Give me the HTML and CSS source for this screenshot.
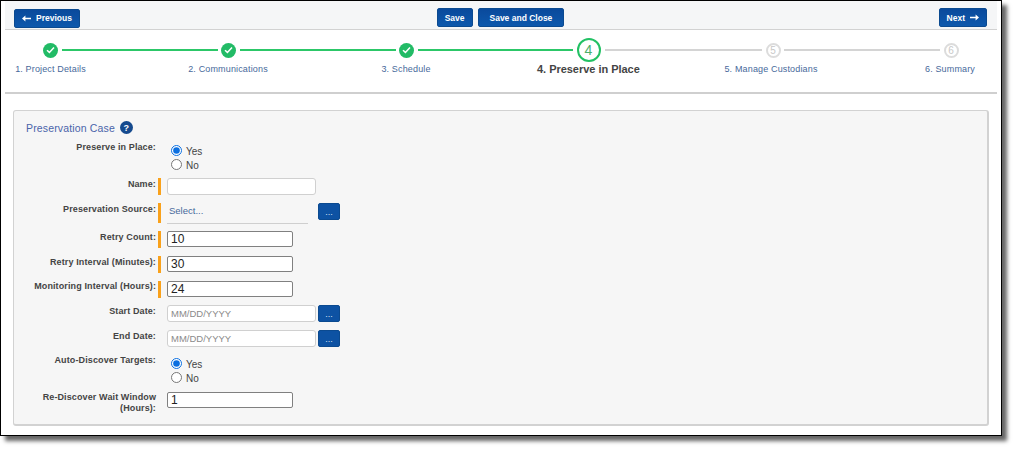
FILE: index.html
```html
<!DOCTYPE html>
<html lang="en">
<head>
<meta charset="utf-8">
<title>Preserve in Place</title>
<link rel="stylesheet" href="styles.css">
</head>
<body>
<div class="frame">
  <div class="toolbar">
    <div class="tb-left">
      <button class="btn" type="button">
        <svg class="arrow" width="9" height="7" viewBox="0 0 9 7"><path d="M0 3.5 3.4 .6V2.7H9V4.3H3.4V6.4Z" fill="#fff"/></svg>
        Previous
      </button>
    </div>
    <div class="tb-center">
      <button class="btn" type="button">Save</button>
      <button class="btn wide" type="button">Save and Close</button>
    </div>
    <div class="tb-right">
      <button class="btn" type="button">
        Next
        <svg class="arrow" width="9" height="7" viewBox="0 0 9 7"><path d="M9 3.5 5.6 .6V2.7H0V4.3H5.6V6.4Z" fill="#fff"/></svg>
      </button>
    </div>
  </div>

  <div class="stepper">
    <div class="track">
      <span class="dot done"><svg width="9" height="8" viewBox="0 0 9 8"><path d="M1 4.2 3.4 6.4 8 1.4" fill="none" stroke="#fff" stroke-width="1.5"/></svg></span>
      <span class="line on l1"></span>
      <span class="dot done"><svg width="9" height="8" viewBox="0 0 9 8"><path d="M1 4.2 3.4 6.4 8 1.4" fill="none" stroke="#fff" stroke-width="1.5"/></svg></span>
      <span class="line on l2"></span>
      <span class="dot done"><svg width="9" height="8" viewBox="0 0 9 8"><path d="M1 4.2 3.4 6.4 8 1.4" fill="none" stroke="#fff" stroke-width="1.5"/></svg></span>
      <span class="line on l3"></span>
      <span class="dot current">4</span>
      <span class="line l4"></span>
      <span class="dot todo">5</span>
      <span class="line l5"></span>
      <span class="dot todo">6</span>
    </div>
    <div class="labels">
      <span class="label">1. Project Details</span>
      <span class="label s2">2. Communications</span>
      <span class="label">3. Schedule</span>
      <span class="label active s4">4. Preserve in Place</span>
      <span class="label s5">5. Manage Custodians</span>
      <span class="label s6">6. Summary</span>
    </div>
  </div>

  <div class="content">
    <section class="panel">
      <h2 class="title">Preservation Case <span class="help">?</span></h2>

      <div class="row r-first">
        <span class="lbl">Preserve in Place:</span>
        <span class="mark none"></span>
        <div class="radios">
          <label class="radio"><input type="radio" name="pip" checked><span class="rtext">Yes</span></label>
          <label class="radio"><input type="radio" name="pip"><span class="rtext">No</span></label>
        </div>
      </div>

      <div class="row r-name">
        <span class="lbl">Name:</span>
        <span class="mark"></span>
        <input class="soft" type="text">
      </div>

      <div class="row r-source">
        <span class="lbl">Preservation Source:</span>
        <span class="mark tall"></span>
        <div class="select">Select...</div>
        <button class="dots" type="button">...</button>
      </div>

      <div class="row r-num tight">
        <span class="lbl">Retry Count:</span>
        <span class="mark"></span>
        <input class="hard" type="text" value="10">
      </div>

      <div class="row r-num">
        <span class="lbl">Retry Interval (Minutes):</span>
        <span class="mark"></span>
        <input class="hard" type="text" value="30">
      </div>

      <div class="row r-num">
        <span class="lbl up">Monitoring Interval (Hours):</span>
        <span class="mark"></span>
        <input class="hard" type="text" value="24">
      </div>

      <div class="row r-num tight">
        <span class="lbl">Start Date:</span>
        <span class="mark none"></span>
        <input class="soft" type="text" placeholder="MM/DD/YYYY">
        <button class="dots" type="button">...</button>
      </div>

      <div class="row r-num">
        <span class="lbl">End Date:</span>
        <span class="mark none"></span>
        <input class="soft" type="text" placeholder="MM/DD/YYYY">
        <button class="dots" type="button">...</button>
      </div>

      <div class="row r-auto">
        <span class="lbl">Auto-Discover Targets:</span>
        <span class="mark none"></span>
        <div class="radios">
          <label class="radio"><input type="radio" name="adt" checked><span class="rtext">Yes</span></label>
          <label class="radio"><input type="radio" name="adt"><span class="rtext">No</span></label>
        </div>
      </div>

      <div class="row r-last">
        <span class="lbl up">Re-Discover Wait Window (Hours):</span>
        <span class="mark none"></span>
        <input class="hard" type="text" value="1">
      </div>
    </section>
  </div>
</div>
</body>
</html>
```

FILE: styles.css
```css
* { box-sizing: border-box; }
html, body { margin: 0; padding: 0; background: #fff; }
body { font-family: "Liberation Sans", Arial, sans-serif; width: 1017px; height: 451px; overflow: hidden; }

.frame {
  width: 1002px;
  height: 436px;
  background: #fff;
  border: 1px solid #000;
  box-shadow: 5px 5px 4px #666;
  padding: 0 4px;
}

.toolbar {
  display: grid;
  grid-template-columns: 1fr auto 1fr;
  align-items: center;
  height: 29px;
  padding: 5px 10px 0 9px;
  background: #f5f6f7;
  border-bottom: 1px solid #d2d2d2;
}
.tb-center { display: flex; gap: 5px; }
.tb-right { display: flex; justify-content: flex-end; }

.btn {
  display: inline-flex;
  align-items: center;
  gap: 5px;
  height: 19px;
  padding: 0 7px;
  border: 1px solid #0b4a90;
  border-radius: 2px;
  background: linear-gradient(#0a4a9c, #0d58ac);
  color: #fff;
  font: bold 8.5px "Liberation Sans", Arial, sans-serif;
}
.btn.wide { padding: 0 11px; }

.stepper {
  height: 64px;
  border-bottom: 2px solid #cfcfcf;
  padding-top: 8px;
}
.track {
  display: flex;
  align-items: center;
  height: 24px;
  padding-left: 38px;
}
.dot {
  display: flex;
  align-items: center;
  justify-content: center;
  flex: none;
  width: 15px;
  height: 15px;
  border-radius: 50%;
}
.done { background: #22bb66; }
.current {
  width: 24px;
  height: 24px;
  border: 2px solid #22c164;
  color: #4caf6a;
  font-size: 14px;
}
.todo {
  border: 2px solid #dcdcdc;
  color: #c8c8c8;
  font-size: 10px;
}
.line { flex: none; height: 2px; margin: 0 3.5px; background: #d4d4d4; }
.line.on { background: #2cc768; }
.l1, .l2 { width: 156px; }
.l3 { width: 155px; margin-right: 4px; }
.l4 { width: 157px; margin: 0 4px; }
.l5 { width: 156px; }

.labels {
  display: flex;
  gap: 78px;
  align-items: center;
  height: 12px;
  margin: 1px 0 0 -4.5px;
}
.label {
  flex: none;
  width: 100px;
  text-align: center;
  white-space: nowrap;
  font-size: 9px;
  letter-spacing: .15px;
  color: #47699b;
}
.label.active { font-size: 11px; font-weight: bold; color: #444; letter-spacing: -.03px; }
.s2 { margin-left: -.5px; }
.s4 { margin-left: 3px; }
.s5 { margin-left: 6px; }
.s6 { margin-left: 1px; }

.content { padding: 16px 8px 0; }

.panel {
  height: 316px;
  background: #f6f6f6;
  border: 1px solid #d2d2d2;
  border-right-width: 2px;
  border-bottom-width: 2px;
  border-radius: 3px;
  padding: 10px 0 0 12px;
}
.title {
  display: flex;
  align-items: center;
  gap: 5px;
  margin: 0;
  height: 13px;
  font-size: 10.5px;
  font-weight: normal;
  color: #4a64aa;
  letter-spacing: .15px;
}
.help {
  display: flex;
  align-items: center;
  justify-content: center;
  width: 13px;
  height: 13px;
  border-radius: 50%;
  background: #154a8e;
  color: #fff;
  font-size: 9px;
  font-weight: bold;
}

.row {
  display: flex;
  align-items: flex-start;
}
.lbl {
  flex: none;
  width: 131px;
  margin-top: 1px;
  padding-right: 1px;
  text-align: right;
  font-size: 9px;
  font-weight: bold;
  line-height: 11px;
  letter-spacing: .12px;
  color: #444;
}
.lbl.up { margin-top: 0; }
.mark {
  flex: none;
  width: 3px;
  height: 17px;
  margin: 0 6px 0 1px;
  background: #f9a11b;
}
.mark.none { background: transparent; }
.mark.tall { height: 20px; }

.r-first { height: 31px; margin-top: 7px; }
.r-name { height: 17px; margin-top: 6px; }
.r-source { height: 21px; margin-top: 8px; }
.r-num { height: 17px; margin-top: 8px; }
.r-num.tight { margin-top: 7px; }
.r-auto { height: 31px; margin-top: 7px; }
.r-last { height: 24px; margin-top: 7px; }

.radios { display: flex; flex-direction: column; gap: 2px; padding: 3px 0 0 4px; }
.radio {
  display: flex;
  align-items: center;
  gap: 4px;
  height: 12px;
  font-size: 10px;
  color: #444;
}
.rtext { margin-top: 2px; }
.radio input { width: 11px; height: 11px; margin: 0; accent-color: #0b6fe0; }

input[type="text"] {
  font-family: "Liberation Sans", Arial, sans-serif;
  background: #fff;
  padding: 0 3px;
  margin: 0;
  outline: none;
}
.soft {
  width: 149px;
  height: 17px;
  border: 1px solid #d0d0d0;
  border-radius: 3px;
  font-size: 9.5px;
}
.soft::placeholder { color: #8a8a8a; opacity: 1; }
.hard {
  width: 126px;
  height: 16px;
  border: 1px solid #808080;
  border-radius: 2px;
  font-size: 12px;
  color: #222;
}

.select {
  width: 141px;
  height: 21px;
  border-bottom: 1px solid #cfcfcf;
  padding: 2px 0 0 2px;
  font-size: 9.5px;
  color: #47699b;
}
.dots {
  width: 22px;
  height: 17px;
  margin: 0 0 0 10px;
  padding: 0;
  border: 1px solid #0b4a90;
  border-radius: 2px;
  background: #0d52a3;
  color: #d8e4f2;
  font: 9px "Liberation Sans", Arial, sans-serif;
}
.soft + .dots { margin-left: 2px; }
```
